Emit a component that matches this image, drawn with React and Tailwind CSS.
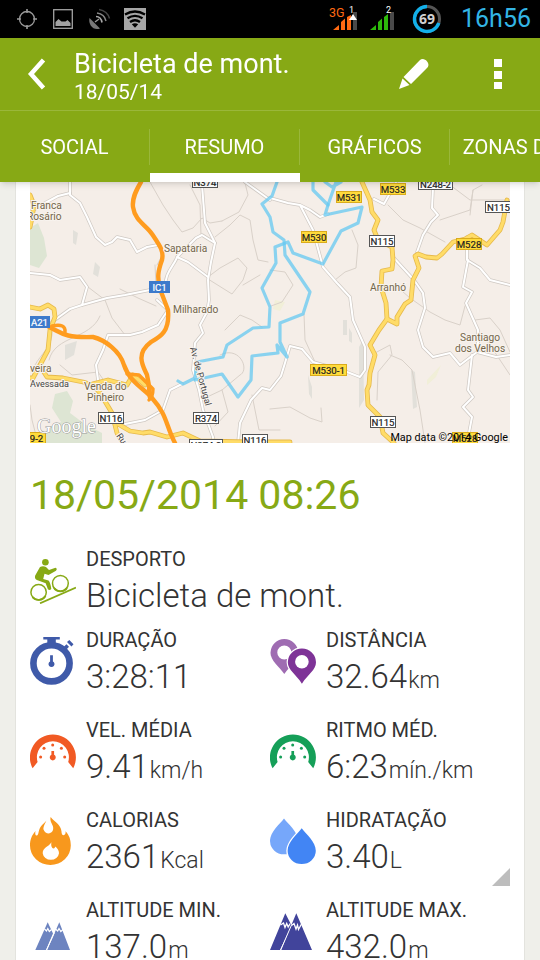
import { useState } from "react";

const tabs = ["SOCIAL", "RESUMO", "GRÁFICOS", "ZONAS DE FC"];

/* Status bar */

function StatusBar() {
  return (
    <div className="flex h-[38px] shrink-0 items-center justify-between bg-black pr-[9px] pl-[9px]">
      <div className="flex items-center">
        <svg className="h-6 w-9" viewBox="0 0 36 24" fill="none" stroke="#9a9a9a">
          <circle cx="18" cy="12" r="7.5" strokeWidth="1.3" />
          <path d="M18 2v4M18 18v4M8 12h4M24 12h4" strokeWidth="1.6" />
        </svg>
        <svg className="h-6 w-9" viewBox="0 0 36 24">
          <rect x="8.700" y="2.700" width="18.600" height="18.600" fill="none" stroke="#a3a3a3" strokeWidth="1.300" />
          <path d="M10.500 19v-4l3-3 3 2.500h4l2-1.500 3 3v3z" fill="#a3a3a3" />
        </svg>
        <svg className="h-6 w-9" viewBox="0 0 36 24" fill="none">
          <path d="M8.500 11c-1.500 7 4 13 10.500 10.500z" fill="#777" />
          <path d="M14 15l4-3" stroke="#999" strokeWidth="1.400" />
          <path d="M15 9.500q5 0 6 6" stroke="#a8a8a8" strokeWidth="1.600" />
          <path d="M16 6q7.500 1 9 8" stroke="#888" strokeWidth="1.500" />
          <path d="M18 2.500q8.500 1.500 10.500 9" stroke="#444" strokeWidth="1.500" />
        </svg>
        <svg className="h-6 w-9" viewBox="0 0 36 24">
          <rect x="7" y="1" width="22" height="22" fill="#a6a6a6" />
          <g fill="none" stroke="#000" strokeWidth="2.300">
            <path d="M8 7.500q10-6 20 0M10.500 11.300q7.500-5 15 0M13 15q5-3.500 10 0" />
          </g>
          <path d="M14.800 17.300q3.200-2 6.400 0L18 20.800z" />
        </svg>
      </div>
      <div className="flex items-center">
        <svg className="mr-[6px] h-[26px] w-8 font-['Roboto']" viewBox="330 5 32 26">
          <text x="330" y="16" fontSize="12.500" fill="#ff6a13">3G</text>
          <path d="M334 29l6-5v5zM342 29v-8l4-3.500V29zM348 29V16l4-2v15z" fill="#ff6a13" />
          <rect x="354" y="11" width="4" height="18" fill="#4a4a4a" />
          <text x="350" y="12" fontSize="9" fill="#fff">1</text>
          <path d="M354 13l4 6h-8z" fill="#fff" />
        </svg>
        <svg className="mr-4 h-[26px] w-7 font-['Roboto']" viewBox="368 5 28 26">
          <path d="M371 29l6-5v5zM379 29v-8l4-3.500V29zM385 29V16l4-3v16z" fill="#2db90b" />
          <rect x="391" y="11" width="4" height="18" fill="#4a4a4a" />
          <text x="387" y="12" fontSize="9" fill="#fff">2</text>
        </svg>
        <svg className="mr-[18px] h-8 w-8 font-['Noto_Sans']" viewBox="0 0 32 32">
          <circle cx="16" cy="16" r="12.500" fill="none" stroke="#555" strokeWidth="3" />
          <path d="M16 3.500A12.500 12.500 0 1 0 27.800 20" fill="none" stroke="#12b0ea" strokeWidth="3.400" />
          <text x="16" y="21" fontSize="14" fontWeight="700" textAnchor="middle" fill="#d0d0d0">69</text>
        </svg>
        <span className="text-[25px] leading-8 text-[#33b5e5]">16h56</span>
      </div>
    </div>
  );
}

/* Map */

const badgeStyles = {
  yellow: { fill: "#ffdb3c", stroke: "#d9ab1c", text: "#222" },
  white: { fill: "#fff", stroke: "#555", text: "#222" },
  blue: { fill: "#3d7acb", stroke: "#3d7acb", text: "#fff" },
};

const badges = [
  { label: "N374", x: 192, y: 176, w: 25, kind: "white" },
  { label: "M531", x: 336, y: 191, w: 25, kind: "yellow" },
  { label: "M533", x: 380, y: 183, w: 25, kind: "yellow" },
  { label: "N248-2", x: 418, y: 178, w: 34, kind: "white" },
  { label: "N115-1", x: 485, y: 201, w: 34, kind: "white" },
  { label: "M530", x: 301, y: 231, w: 25, kind: "yellow" },
  { label: "N115", x: 369, y: 235, w: 25, kind: "white" },
  { label: "M528", x: 456, y: 238, w: 25, kind: "yellow" },
  { label: "IC1", x: 149, y: 281, w: 20, kind: "blue" },
  { label: "A21", x: 29, y: 316, w: 20, kind: "blue" },
  { label: "M530-1", x: 310, y: 364, w: 36, kind: "yellow" },
  { label: "N116", x: 98, y: 412, w: 25, kind: "white" },
  { label: "R374", x: 193, y: 412, w: 25, kind: "white" },
  { label: "N115", x: 370, y: 416, w: 25, kind: "white" },
  { label: "9-2", x: 27, y: 432, w: 18, kind: "yellow" },
  { label: "N116", x: 242, y: 434, w: 25, kind: "white" },
  { label: "N374-2", x: 189, y: 439, w: 33, kind: "white" },
  { label: "M528", x: 452, y: 432, w: 25, kind: "yellow" },
];

const places = [
  { label: "Franca", x: 31, y: 209 },
  { label: "Rosário", x: 27, y: 220 },
  { label: "Sapataria", x: 164, y: 252 },
  { label: "Milharado", x: 173, y: 313 },
  { label: "Arranhó", x: 370, y: 291 },
  { label: "Santiago", x: 460, y: 341 },
  { label: "dos Velhos", x: 455, y: 352 },
  { label: "veira", x: 30, y: 372 },
  { label: "Venda do", x: 84, y: 390 },
  { label: "Pinheiro", x: 87, y: 401 },
];

const minorRoads = [
  "M70 182V195L80 203 87 217 96 237 105 245 112 242 117 237 130 240 137 252 147 247 158 245",
  "M30 212L45 203 58 196 70 193",
  "M30 273L50 275 60 280 80 277 87 287 82 305 107 298 125 295 150 290",
  "M82 305L70 309 52 322",
  "M202 185L205 223 215 243 211 262 208 280 209 300 207 312 200 325 203 333 195 343 193 370 199 390 203 410 213 437V443",
  "M165 290C164 272 175 265 177 257L196 238 202 235 210 240 215 243M177 257L188 262 208 277",
  "M433 188L432 208 438 215 431 222 423 235 417 252",
  "M270 198L288 203 300 205 310 210 320 217 328 214M300 205L313 230 323 267 337 283 350 297 353 320 365 347V370L360 377 347 372 313 362 302 349 290 346 285 363 281 376 270 390 262 388 251 400 240 423 238 443",
  "M393 257L414 280 423 293 425 308 418 330 423 347 433 357 450 353 460 365 477 352 496 357 510 355",
  "M472 355L468 390 473 397 463 407 472 417 468 438",
  "M467 237V260L480 268 490 280 510 285M468 260L463 287 472 292 466 303 478 330 478 350",
  "M157 300L168 310 158 325 142 332 130 335 108 335 103 350 96 365 98 380",
  "M125 424L145 420 163 410 170 390 182 384",
  "M374 199L384 204 389 195 396 182",
  "M245 182L270 200",
];

const trails = [
  "M150 182L163 205 173 220 182 232 193 228 202 218 210 223 222 221",
  "M190 185L200 205 201 235M155 265L156 285M157 265L165 250",
  "M215 237L230 225 240 215 250 220 253 240 258 260 268 262",
  "M208 277L220 268 238 258 247 268 243 280 232 294 208 279M243 285L260 275",
  "M88 287L105 300 112 318 125 335M120 289L138 298 156 306",
  "M52 330C54 345 40 355 35 365M100 316C90 340 55 335 49 360",
  "M30 405L32 420 38 443M60 365L72 375 98 372 105 382",
  "M222 221L239 212 248 195 245 183",
  "M352 230L358 245 356 268 345 272 335 280M388 205L403 220 420 228 445 242M395 285L410 298 430 312 445 320 460 325 465 306",
  "M440 220L470 210 473 190 482 185M473 190L470 215M375 353L390 345 392 355 378 372 377 400M390 355L402 360 412 370 420 410 425 443",
  "M270 409L290 407 310 418 322 422 321 408M270 270L285 272 293 285 282 302 271 306M304 314L305 340 315 362",
  "M225 330L240 315 252 320 262 327M220 355C240 345 250 370 240 375L222 390 205 398M222 390L228 412 215 426M252 395L259 430 280 430",
  "M475 320L490 318 500 330 510 352M483 335L498 357 510 375M450 185L470 200 510 200",
];

const mainRoads = [
  "M30 307L40 309 48 305 54 309 55 317 50 330 48 350 40 365 33 378H30M40 366L47 377 63 378 83 382 93 385 100 393 112 413 117 433 123 443",
  "M92 384L108 380 127 385 133 375 145 385M118 424L130 431 143 433 150 432 167 437 183 433 200 441 250 442H290",
  "M362 182L370 200 372 212 378 220 374 230 378 240 392 247 393 260 392 269 382 271 381 287 386 303 387 319 379 330 370 345 375 355 370 373 369 385 367 390 368 405 380 417 383 433 394 443",
  "M507 200L503 222 500 230 487 245 472 235 465 239 453 242 442 254 437 258 426 257 418 254 415 256 419 268 413 280 411 300 405 304 397 317 397 324 387 319",
  "M30 195L34 205 32 218 30 227",
];

const motorways = [
  "M141 182C135 192 132 199 133 207C135 221 146 225 152 234C160 246 164 251 162 260C158 271 157 277 160 289L168 310C170 332 160 337 151 342C135 354 143 366 147 375C150 388 149 391 150 398",
  "M49 327C61 332 62 338 93 337C105 340 120 351 124 365C130 383 145 389 152 398C168 416 165 424 175 443",
];

const ramps = "M52 326q14-3 13 6M127 374l12 1 14 14q0 8-4 11";

const track = [
  "M277 182L272 196 262 204 270 217 273 232 284 240 285 255 310 292 303 314 280 323V342L287 357 277 345 278 353 252 356 251 380 238 397 222 374 195 380",
  "M313 182V190L328 205 325 215 362 207 358 223 341 231 323 264 293 253 288 242 275 247 276 263 262 288 270 307 269 327 253 328 227 345 223 357 197 362 195 378 183 384 178 381",
  "M325 182L332 187 341 182M336 182L328 205",
];

function Badge({ label, x, y, w, kind }) {
  const style = badgeStyles[kind];
  return (
    <g>
      <rect x={x + 0.5} y={y + 0.5} width={w} height="11" fill={style.fill} stroke={style.stroke} />
      <text x={x + w / 2 + 0.5} y={y + 9.5} fontSize="9.6" textAnchor="middle" fill={style.text} stroke={style.text} strokeWidth="0.2">
        {label}
      </text>
    </g>
  );
}

function RouteMap() {
  return (
    <svg className="block w-full font-['Roboto']" viewBox="30 182 480 261" role="img" aria-label="Mapa">
      <rect x="30" y="182" width="480" height="261" fill="#f5eee8" />
      <g fill="#dde5d3">
        <path d="M30 228l8-5 6 15 3 18-8 12-9-3z" />
        <path d="M55 394l12-3 6 10-3 12 16 12 16 8v10H44l3-15 14-6-9-14z" />
      </g>
      <g fill="#e2e0da">
        <path d="M359 347l4-7 1 60-5 8zM411 370l4 2 2 35-4 2zM343 320h4v15h-4zM349 328l3 5v10l-3-2zM95 262l5 5-2 10-5-3zM308 375l4 12v12l-3-5zM73 230l5 3-2 12-3-2zM65 345l12-4-3 14-9 5z" />
      </g>
      <path d="M427 380l14-15-5 12-9 8zM275 300l10 2-5 9-7-2z" fill="#f1efd8" />

      <g fill="none" strokeLinejoin="round" strokeLinecap="round">
        {trails.map((d) => (
          <path key={d} d={d} stroke="#d9d1c9" strokeWidth="1" />
        ))}
        {minorRoads.map((d) => (
          <path key={d} d={d} stroke="#cfc9c3" strokeWidth="3.4" />
        ))}
        {minorRoads.map((d) => (
          <path key={d} d={d} stroke="#fff" strokeWidth="2" />
        ))}
        {mainRoads.map((d) => (
          <path key={d} d={d} stroke="#e6b94c" strokeWidth="4.8" />
        ))}
        {mainRoads.map((d) => (
          <path key={d} d={d} stroke="#ffdc68" strokeWidth="3.2" />
        ))}
        {motorways.map((d) => (
          <path key={d} d={d} stroke="#ff9c1f" strokeWidth="4.4" />
        ))}
        <path d={ramps} stroke="#ff9c1f" strokeWidth="3.4" />
        {track.map((d) => (
          <path key={d} d={d} stroke="#64c8f2" strokeOpacity="0.75" strokeWidth="3.2" />
        ))}
      </g>

      {badges.map((badge) => (
        <Badge key={`${badge.label}-${badge.x}`} {...badge} />
      ))}

      <g fontSize="10.2" fill="#73664a" stroke="#f8f3ee" strokeWidth="2" paintOrder="stroke">
        {places.map((place) => (
          <text key={place.label} x={place.x} y={place.y}>
            {place.label}
          </text>
        ))}
      </g>
      <g fontSize="9" fill="#444" stroke="#f8f3ee" strokeWidth="2" paintOrder="stroke">
        <text x="30" y="387">Avessada</text>
        <text transform="translate(190 348) rotate(75)">Av. de Portugal</text>
        <text transform="translate(116 436) rotate(55)">Rua</text>
      </g>

      <text x="37" y="433" fontSize="20" fill="#fff" stroke="#999" strokeWidth="1" paintOrder="stroke" className="font-['Liberation_Serif']">
        Google
      </text>
      <text x="508" y="441" fontSize="10.8" textAnchor="end" fill="#000" className="font-['Roboto']">
        Map data ©2014 Google
      </text>
    </svg>
  );
}

/* Icons, all on the same 46x48 box */

function Icon({ children }) {
  return (
    <svg className="mt-[9px] h-12 w-[46px] shrink-0" viewBox="0 0 46 48" aria-hidden="true">
      {children}
    </svg>
  );
}

function BikeIcon() {
  return (
    <Icon>
      <g fill="none" stroke="#87a915">
        <circle cx="8.600" cy="36.200" r="7.700" strokeWidth="1.500" />
        <circle cx="30.400" cy="27.300" r="7.900" strokeWidth="1.500" />
        <path d="M2.500 41a8 8 0 0 0 13-1M24 32a8 8 0 0 0 13 0" strokeWidth="1.900" />
        <path d="M10 47.300L46 31.500" strokeWidth="1.800" />
      </g>
      <g fill="#87a915">
        <circle cx="15.400" cy="6.300" r="3.300" />
        <path d="M10 11q3-1.700 6 0l3 3 6.500-2.200q2.200 1 .5 3l-7.500 4.200-4-1.200-1.300 5.200 5.300 1.500q2 2 2.800 8.500-1.700 1.800-3.400.3l-2.200-6-8.800-3.300q-2.700-1.500-1.700-4.500z" />
      </g>
    </Icon>
  );
}

function StopwatchIcon() {
  return (
    <Icon>
      <circle cx="21.500" cy="26.300" r="18.100" fill="none" stroke="#3f5aa9" strokeWidth="6.600" />
      <g fill="#3f5aa9">
        <path d="M13.300 0h16.500v2.500h-4V7h-8.500V2.500h-4z" />
        <path d="M33 10.500l3.500-3.200 2.500 2.500-3.200 3.500zM37 5l2.300-2 4.200 4.200-2 2.200z" />
        <path d="M20.100 18.300h2.800v6.100a3 3 0 1 1-2.800 0z" />
      </g>
    </Icon>
  );
}

function PinsIcon() {
  return (
    <Icon>
      <path
        fillRule="evenodd"
        d="M14.300 2A14 14 0 0 1 28.300 15.500C28.300 23 20 29 14.300 37C9 29 .5 24 .5 15.500A14 14 0 0 1 14.300 2zM14.300 8.500a7 7 0 1 0 0 14 7 7 0 0 0 0-14z"
        fill="#9f6cb2"
      />
      <path
        d="M31.900 11.500A14 14 0 0 1 46 25.200C46 33 38 37 31.900 46.700C26 37 17.800 33 17.800 25.200A14 14 0 0 1 31.900 11.500z"
        fill="#7e3397"
        stroke="#fff"
        strokeWidth="2.400"
        paintOrder="stroke"
      />
      <circle cx="31.900" cy="24.700" r="6.800" fill="#fff" />
    </Icon>
  );
}

function GaugeIcon({ color }) {
  return (
    <Icon>
      <g fill={color}>
        <path d="M2.600 41.300A23 23 0 1 1 43.200 41.300L38.200 35A16 16 0 1 0 7.600 35z" />
        <circle cx="22.700" cy="18" r="1.500" />
        <circle cx="14" cy="21.300" r="1.500" />
        <circle cx="31.400" cy="21.300" r="1.500" />
        <circle cx="10.600" cy="30" r="1.500" />
        <circle cx="34.700" cy="30" r="1.500" />
        <path d="M21.400 24h2.700v3.800a3 3 0 1 1-2.700 0z" />
      </g>
    </Icon>
  );
}

function FlameIcon() {
  return (
    <Icon>
      <path
        d="M20.700 0C24 4.500 31 7.500 31.500 14.500C31.500 17 32.300 18 33.500 18.200C35 18.200 36 16.500 35.500 14.300C39.500 18.500 40.800 23 40.800 28.500A20.300 19.300 0 0 1 0 28.500C0 23 1.500 18.500 5.500 14C4.800 17 5.500 19 7 18.500C9 17.500 8 14 10.500 10C12.500 7 15 5.500 16.500 3.500C15.500 5.500 13 10 13.500 12.500C14.500 15 16.500 16.500 18.500 16.500C21.500 16.200 24 13.500 23 9.500C22 6.500 19.500 3.500 20.700 0z"
        fill="#f8981d"
      />
      <path d="M21.500 25.300C20.800 28 21.500 31.200 23.500 31.500C24.500 31.500 25 30.500 25 29.500C27.500 31 29 33.500 29 36.200A8.200 7.500 0 0 1 12.700 36.200C12.700 30.500 18.500 30 21.500 25.300z" fill="#fff" />
    </Icon>
  );
}

function DropsIcon() {
  return (
    <Icon>
      <path d="M14 1.600C18 7 28 15 28 24A14 13.300 0 0 1 0 24C0 15 10 7 14 1.600z" fill="#76a7fa" />
      <path
        d="M31.700 11.300C36 17 45.800 25 45.800 33.800A14.100 13.200 0 0 1 17.600 33.800C17.600 25 27.500 17 31.700 11.300z"
        fill="#4285f4"
        stroke="#fff"
        strokeWidth="2.600"
        paintOrder="stroke"
      />
    </Icon>
  );
}

function LowMountainIcon() {
  return (
    <Icon>
      <path d="M5.300 43L17.700 15.300 23 26.500 16 43zM17.100 43L29.300 15.300 40 43z" fill="#6d84c0" />
      <path d="M14.500 22l2 2 1.300-2.500 1.500 3 2.200-2M25.500 22l2.200 2 1.300-2.500 1.800 3 2.200-2" fill="none" stroke="#fff" strokeWidth="1.200" />
      <path d="M16.300 43.500L24.500 25.500" stroke="#fff" strokeWidth="1" />
    </Icon>
  );
}

function HighMountainIcon() {
  return (
    <Icon>
      <path d="M0 43L15.300 6.300 21.500 18.500 10 43zM11 43L26.300 6.300 42 43z" fill="#41449b" />
      <path d="M10.500 18l3-2 1.500 4.500 1.700-4 1.500 3.500 2-3.500M21.500 18.500l2.500-2 2 5.500 1.500-4 1 4.500 3-5.500" fill="none" stroke="#fff" strokeWidth="1.300" />
      <path d="M10.500 43.500L21.500 18" stroke="#fff" strokeWidth="1" />
    </Icon>
  );
}

/* Workout data */

const stats = [
  { label: "DURAÇÃO", value: "3:28:11", unit: "", icon: <StopwatchIcon /> },
  { label: "DISTÂNCIA", value: "32.64", unit: "km", icon: <PinsIcon /> },
  { label: "VEL. MÉDIA", value: "9.41", unit: "km/h", icon: <GaugeIcon color="#f15a24" /> },
  { label: "RITMO MÉD.", value: "6:23", unit: "mín./km", icon: <GaugeIcon color="#159f58" /> },
  { label: "CALORIAS", value: "2361", unit: "Kcal", icon: <FlameIcon /> },
  { label: "HIDRATAÇÃO", value: "3.40", unit: "L", icon: <DropsIcon /> },
  { label: "ALTITUDE MIN.", value: "137.0", unit: "m", icon: <LowMountainIcon /> },
  { label: "ALTITUDE MAX.", value: "432.0", unit: "m", icon: <HighMountainIcon /> },
];

function Stat({ label, value, unit, icon }) {
  return (
    <div className="flex gap-[10px]">
      {icon}
      <dl className="flex flex-col gap-[5px] whitespace-nowrap text-[#333]">
        <dt className="text-xl leading-6">{label}</dt>
        <dd className="flex items-baseline gap-px text-[33px] leading-10 font-light">
          {value}
          {unit && <span className="text-[23px] leading-6">{unit}</span>}
        </dd>
      </dl>
    </div>
  );
}

export default function App() {
  const [activeTab, setActiveTab] = useState("RESUMO");

  return (
    <div className="flex h-screen flex-col overflow-hidden bg-[#efefea] font-['Roboto',sans-serif]">
      <StatusBar />

      <header className="relative z-10 shrink-0 bg-[#87a915] text-white shadow-md">
        <div className="flex h-[73px] items-center border-b border-[#9ab73a]">
          <button type="button" aria-label="Voltar" className="flex h-full w-[74px] items-center justify-center">
            <svg className="h-8 w-6" viewBox="0 0 24 32" fill="none" stroke="#fff" strokeWidth="4.500">
              <path d="M18.500 2L6 16l12.500 14" />
            </svg>
          </button>
          <div className="min-w-0 flex-1 pt-[3px]">
            <h1 className="truncate text-[27px] leading-8">Bicicleta de mont.</h1>
            <p className="text-[21px] leading-6">18/05/14</p>
          </div>
          <button type="button" aria-label="Editar" className="flex h-full w-[84px] items-center justify-center">
            <svg className="h-8 w-8" viewBox="0 0 32 32" fill="#fff">
              <path d="M21.500 2.500a5 5 0 0 1 8 1.500 5 5 0 0 1-1 6.500L13 26 5.500 19zM4.500 20.500l7 6.500L1 31z" />
            </svg>
          </button>
          <button type="button" aria-label="Mais opções" className="flex h-full w-[84px] items-center justify-center">
            <svg className="h-8 w-2" viewBox="0 0 8 32" fill="#fff">
              <path d="M0 1h8v8H0zM0 13h8v8H0zM0 24h8v7H0z" />
            </svg>
          </button>
        </div>

        <nav role="tablist" className="flex h-[71px] overflow-hidden">
          {tabs.map((tab) => (
            <button
              key={tab}
              type="button"
              role="tab"
              aria-selected={tab === activeTab}
              onClick={() => setActiveTab(tab)}
              className="flex min-w-[150px] shrink-0 flex-col text-xl whitespace-nowrap"
            >
              <span className="mt-[18px] flex h-9 w-full items-center justify-center border-r border-[#9ab73a] px-3">{tab}</span>
              <span className={`mt-auto h-[9px] w-full ${tab === activeTab ? "bg-white" : ""}`} />
            </button>
          ))}
        </nav>
      </header>

      <main className="relative mx-[15px] min-h-0 flex-1 overflow-y-auto border-x border-[#e3e3de] bg-white px-[14px] [scrollbar-width:none]">
        <RouteMap />
        <h2 className="mt-7 text-[41px] leading-[48px] text-[#87a915]">18/05/2014 08:26</h2>

        <div className="mt-7">
          <Stat label="DESPORTO" value="Bicicleta de mont." icon={<BikeIcon />} />
        </div>
        <div className="mt-3 grid grid-cols-2 gap-y-[21px] pb-6">
          {stats.map((stat) => (
            <Stat key={stat.label} {...stat} />
          ))}
        </div>
      </main>

      {/* Corner handle over the page */}
      <svg className="absolute right-[30px] bottom-[74px] h-[18px] w-[18px]" viewBox="0 0 18 18" aria-hidden="true">
        <path d="M18 0v18H0z" fill="#bdbdbd" />
      </svg>
    </div>
  );
}
